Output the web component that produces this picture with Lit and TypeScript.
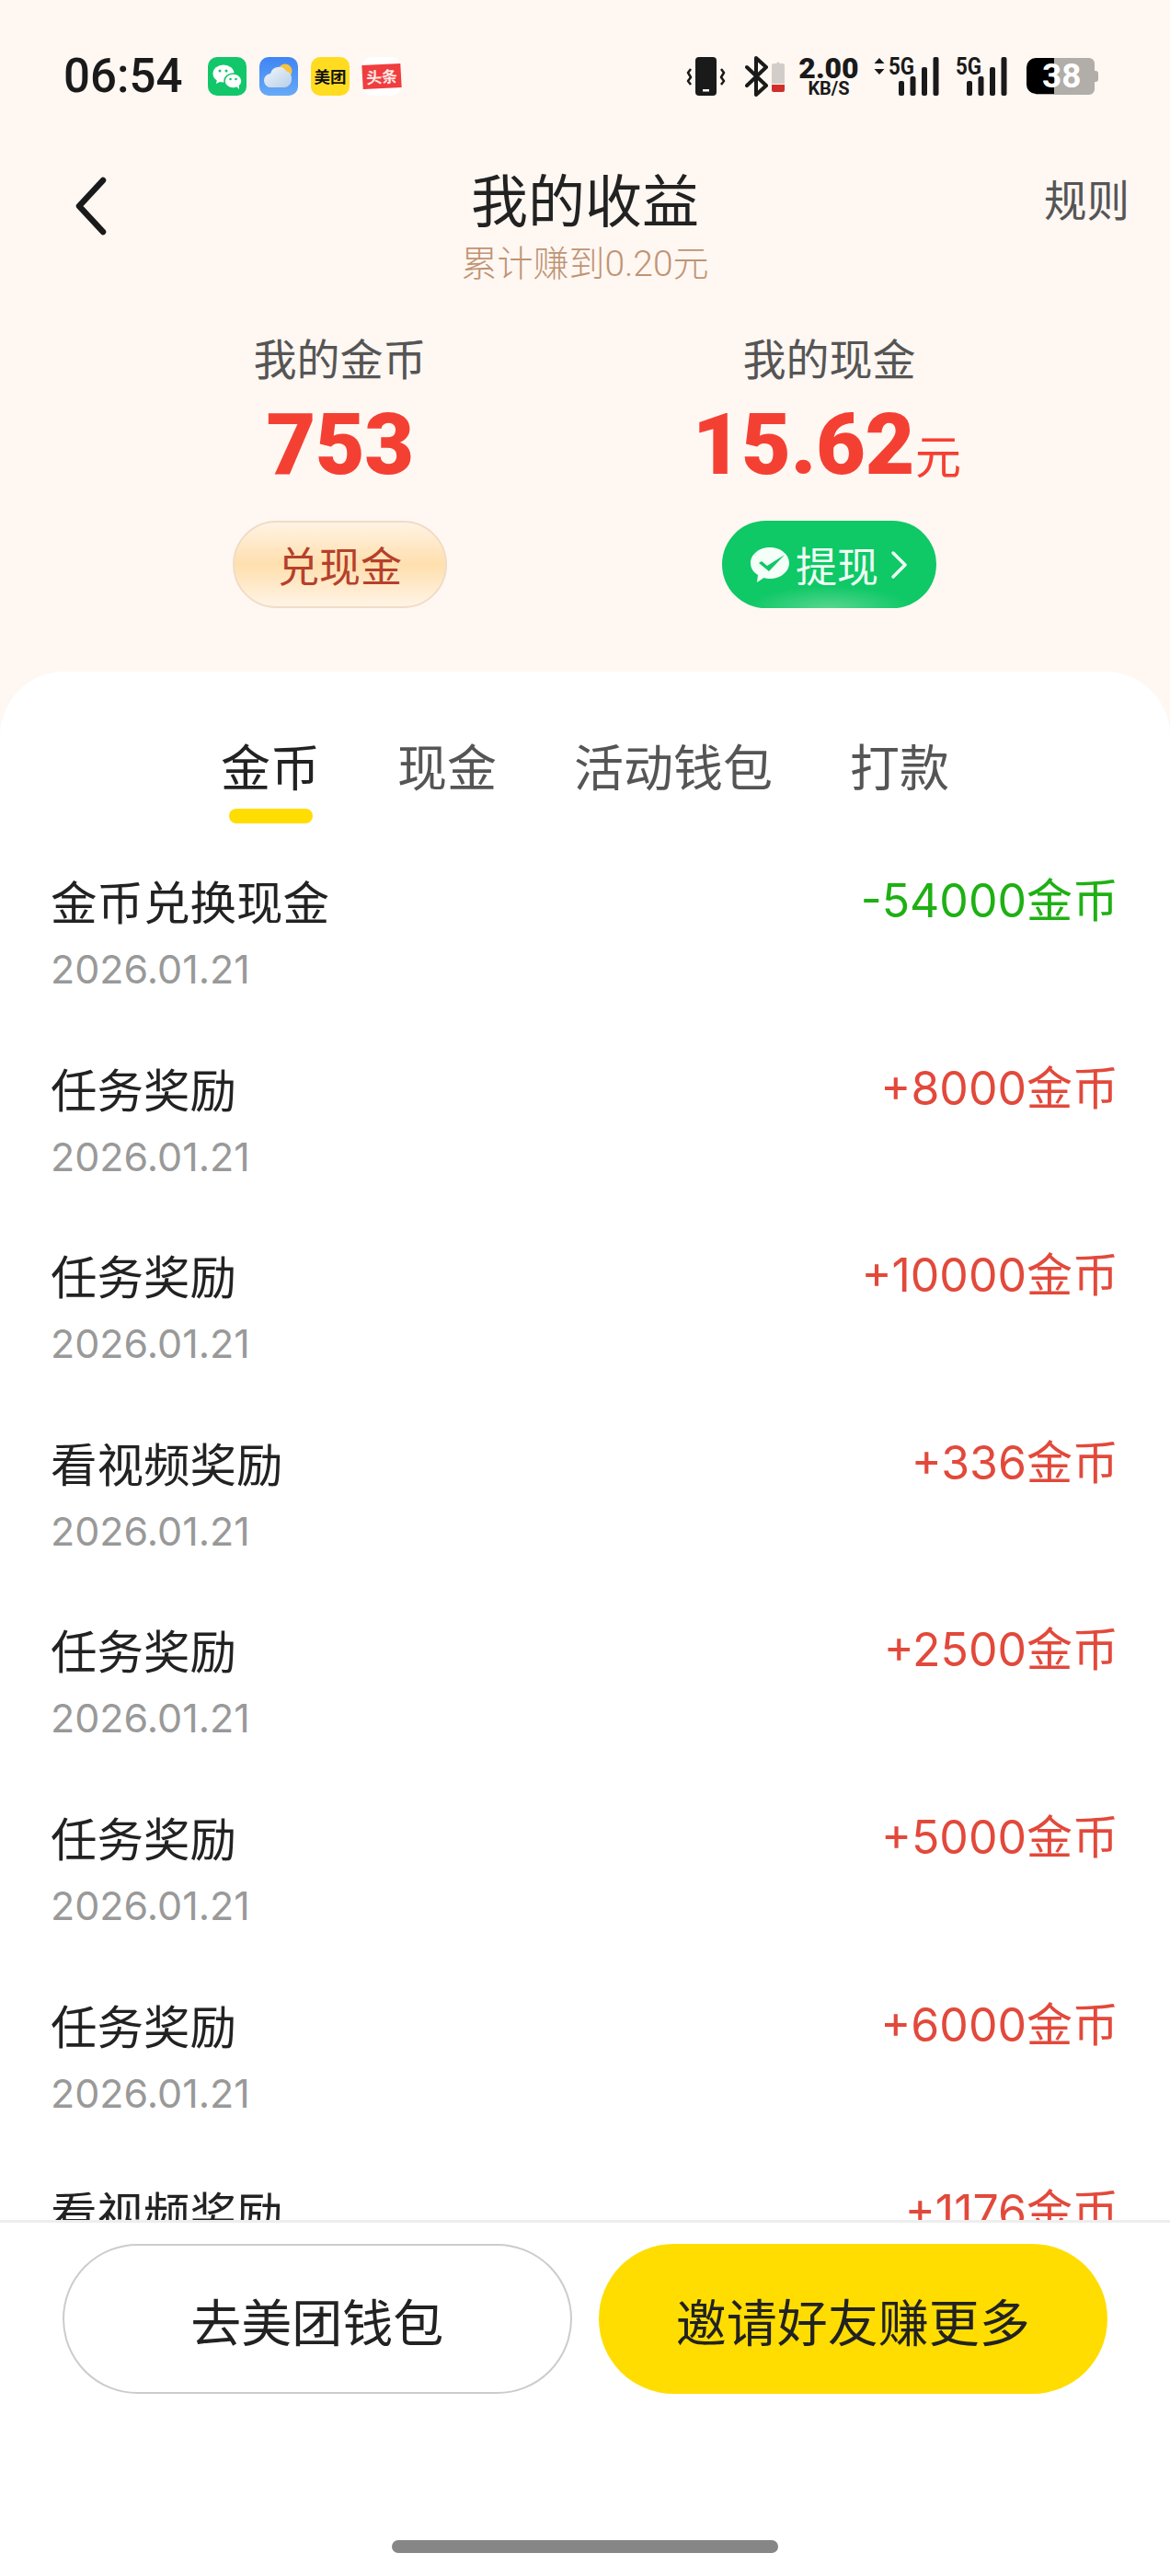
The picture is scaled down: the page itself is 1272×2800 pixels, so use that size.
import { LitElement, html, css, svg } from "lit";
import { customElement } from "lit/decorators.js";

const rows: [string, string, string][] = [
  ["金币兑换现金", "-54000金币", "neg"],
  ["任务奖励", "+8000金币", "pos"],
  ["任务奖励", "+10000金币", "pos"],
  ["看视频奖励", "+336金币", "pos"],
  ["任务奖励", "+2500金币", "pos"],
  ["任务奖励", "+5000金币", "pos"],
  ["任务奖励", "+6000金币", "pos"],
  ["看视频奖励", "+1176金币", "pos"],
];

const bars = (x0: number) => svg`
  <rect x="${x0}" y="27" width="6" height="16" rx="2"/>
  <rect x="${x0 + 12.5}" y="22" width="6" height="21" rx="2"/>
  <rect x="${x0 + 25}" y="12" width="6" height="31" rx="2"/>
  <rect x="${x0 + 37.5}" y="1" width="6" height="42" rx="2"/>`;

@customElement("app-root")
export class AppRoot extends LitElement {
  static styles = css`
    :host {
      display: block;
      width: 1272px;
      height: 2800px;
      font-family: Inter, "Noto Sans CJK SC", sans-serif;
      color: #222;
    }
    .page {
      height: 2800px;
      background: #fff7f2;
      display: flex;
      flex-direction: column;
      overflow: hidden;
    }
    .status {
      height: 42px;
      margin-top: 62px;
      padding-left: 69px;
      display: flex;
      align-items: center;
    }
    .time {
      font-family: Roboto, sans-serif;
      font-size: 51px;
      font-weight: 500;
      color: #1a1a1a;
      width: 157px;
      line-height: 42px;
    }
    .apps {
      display: flex;
      gap: 14px;
    }
    .app {
      width: 42px;
      height: 42px;
      display: block;
    }
    .tile {
      box-sizing: border-box;
      width: 42px;
      height: 42px;
      border-radius: 10px;
      display: flex;
      align-items: center;
      justify-content: center;
      font-family: "Noto Sans CJK SC", sans-serif;
      font-weight: 700;
      white-space: nowrap;
    }
    .tile.mt {
      background: #ffdc1f;
      color: #111;
      font-size: 17.5px;
      line-height: 20px;
    }
    .tile.tt {
      background: #fff;
    }
    .band {
      width: 42px;
      height: 26px;
      transform: rotate(-3deg);
      background: #ef3d40;
      color: #ffe9e6;
      font-size: 17px;
      line-height: 26px;
      text-align: center;
    }
    .sys {
      margin-left: 310px;
      display: flex;
      align-items: center;
      height: 44px;
      color: #1a1a1a;
    }
    .sys svg {
      display: block;
      flex: none;
    }
    .speed {
      width: 68px;
      margin: 0 15px 0 14px;
      text-align: center;
      font-family: Roboto, sans-serif;
      font-weight: 700;
      line-height: 1;
    }
    .speed b {
      display: block;
      font-size: 32px;
      height: 26px;
      line-height: 26px;
    }
    .speed i {
      display: block;
      font-style: normal;
      font-size: 20px;
      line-height: 18px;
    }
    .net {
      position: relative;
      height: 44px;
      flex: none;
    }
    .g {
      position: absolute;
      top: -1px;
      font-family: Roboto, sans-serif;
      font-size: 26px;
      line-height: 24px;
      font-weight: 700;
      color: #1a1a1a;
      transform: scaleX(0.86);
      transform-origin: left center;
    }
    .batt {
      position: relative;
      flex: none;
      width: 78px;
      height: 40px;
      margin-left: 21px;
    }
    .batt span {
      position: absolute;
      left: 17px;
      top: 0;
      font-family: Roboto, sans-serif;
      font-size: 37px;
      line-height: 40px;
      font-weight: 700;
      color: #fff;
    }
    .nav {
      position: relative;
      height: 120px;
      margin-top: 72px;
      text-align: center;
    }
    .back {
      position: absolute;
      left: 76px;
      top: 14px;
    }
    .title {
      font-size: 62px;
      line-height: 88px;
      color: #222;
    }
    .rule {
      position: absolute;
      right: 44px;
      top: 12px;
      font-size: 46.5px;
      line-height: 60px;
      color: #555;
    }
    .sub {
      font-family: Roboto, "Noto Sans CJK SC", sans-serif;
      font-size: 39px;
      line-height: 46px;
      color: #bf9474;
      font-weight: 300;
    }
    .stats {
      display: flex;
      margin-top: 65px;
      padding-left: 253px;
      gap: 299px;
    }
    .stat {
      width: 233px;
      display: flex;
      flex-direction: column;
      align-items: center;
    }
    .label {
      font-size: 47px;
      line-height: 60px;
      color: #555;
      white-space: nowrap;
    }
    .num {
      font-family: Roboto, "Noto Sans CJK SC", sans-serif;
      font-size: 93px;
      font-weight: 900;
      line-height: 100px;
      height: 100px;
      margin-top: 13px;
      color: #f44033;
      white-space: nowrap;
      letter-spacing: -0.5px;
    }
    .num small {
      font-size: 50px;
      font-weight: 400;
      margin-left: 1px;
      padding-right: 6px;
    }
    .btn {
      box-sizing: border-box;
      width: 233px;
      height: 95px;
      margin-top: 32px;
      border-radius: 48px;
      display: flex;
      align-items: center;
      justify-content: center;
      font-size: 45px;
    }
    .btn.gold {
      border: 2px solid #f0dcc6;
      color: #b5402b;
      background: linear-gradient(#fff3e4 0%, #ffdfae 50%, #fff4e6 100%);
    }
    .btn.green {
      color: #eefff4;
      gap: 6px;
      background: radial-gradient(ellipse 90px 24px at 50% 100%, #57d68f, transparent), #0fc866;
    }
    .sheet {
      flex: 1;
      min-height: 0;
      margin-top: 69px;
      background: #fff;
      border-radius: 70px 70px 0 0;
      display: flex;
      flex-direction: column;
    }
    .tabs {
      display: flex;
      justify-content: center;
      gap: 84px;
      padding: 0;
      margin-top: 70px;
      height: 72px;
      font-size: 54px;
      line-height: 72px;
      color: #555;
      flex: none;
    }
    .tab {
      position: relative;
      white-space: nowrap;
    }
    .tab.on {
      color: #222;
    }
    .tab.on::after {
      content: "";
      position: absolute;
      left: 9px;
      right: 8px;
      top: 79px;
      height: 16px;
      border-radius: 8px;
      background: #ffdd00;
    }
    .list {
      flex: 1;
      min-height: 0;
      overflow: hidden;
      padding: 0 56px 0 55px;
      margin-top: 75px;
    }
    .row {
      height: 203.6px;
      display: flex;
      justify-content: space-between;
    }
    .name {
      font-size: 50.5px;
      line-height: 70px;
      color: #222;
    }
    .date {
      font-size: 43px;
      line-height: 60px;
      margin-top: 6px;
      color: #999;
    }
    .val {
      font-size: 50px;
      line-height: 70px;
      margin-top: -3px;
    }
    .val.neg {
      color: #1fb014;
    }
    .val.pos {
      color: #e2493b;
    }
    .foot {
      flex: none;
      height: 387px;
      box-sizing: border-box;
      border-top: 3px solid #eee;
      background: #fff;
      position: relative;
      display: flex;
      gap: 29px;
      padding: 23px 68px 0 68px;
      align-items: flex-start;
    }
    .cta {
      box-sizing: border-box;
      height: 163px;
      flex: 1 1 553px;
      border-radius: 82px;
      display: flex;
      align-items: center;
      justify-content: center;
      font-size: 55px;
      color: #222;
    }
    .cta.line {
      border: 2px solid #ccc;
    }
    .cta.fill {
      background: #ffdd00;
      color: #222;
    }
    .home {
      position: absolute;
      left: 426px;
      top: 345px;
      width: 420px;
      height: 14px;
      border-radius: 7px;
      background: #868686;
    }
  `;

  render() {
    return html`
      <div class="page">
        <div class="status">
          <div class="time">06:54</div>
          <div class="apps">
            <svg class="app" viewBox="0 0 42 42">
              <rect width="42" height="42" rx="10" fill="#12c76a"/>
              <ellipse cx="17" cy="18" rx="11.5" ry="9.500" fill="#fff"/>
              <path d="M10 24l-1 5 6-3z" fill="#fff"/>
              <ellipse cx="27.500" cy="26" rx="9.500" ry="8" fill="#fff" stroke="#12c76a" stroke-width="1.500"/>
              <path d="M31 32l3 3 0-5z" fill="#fff"/>
              <circle cx="13" cy="15" r="1.500" fill="#12c76a"/><circle cx="20" cy="15" r="1.500" fill="#12c76a"/>
              <circle cx="24.500" cy="24" r="1.300" fill="#12c76a"/><circle cx="30.500" cy="24" r="1.300" fill="#12c76a"/>
            </svg>
            <svg class="app" viewBox="0 0 42 42">
              <defs>
                <linearGradient id="sky" x1="0" y1="0" x2="0" y2="1"><stop offset="0" stop-color="#3f84f4"/><stop offset="1" stop-color="#68a9f6"/></linearGradient>
                <linearGradient id="cl" x1="0" y1="0" x2="1" y2="1"><stop offset="0" stop-color="#f2f6fa"/><stop offset="1" stop-color="#b7cfe8"/></linearGradient>
              </defs>
              <rect width="42" height="42" rx="10" fill="url(#sky)"/>
              <circle cx="28" cy="15" r="7.500" fill="#f7c43c"/>
              <path d="M13 33a7 7 0 0 1-1-15 9.500 9.500 0 0 1 17-3 9 9 0 0 1 6 9 8.500 8.500 0 0 1-7 9z" fill="url(#cl)"/>
            </svg>
            <div class="tile mt">美团</div>
            <div class="tile tt"><div class="band">头条</div></div>
          </div>
          <div class="sys">
            <svg width="44" height="44" viewBox="0 0 44 44">
              <rect x="10" y="1" width="23" height="42" rx="4" fill="#1a1a1a"/>
              <rect x="18" y="36" width="7" height="2.500" fill="#fff"/>
              <path d="M5 14l-3 4 3 5-3 4 3 4M38 14l3 4-3 5 3 4-3 4" fill="none" stroke="#1a1a1a" stroke-width="2.500" stroke-linejoin="round"/>
            </svg>
            <svg style="margin-left:20px" width="26" height="44" viewBox="0 0 26 44">
              <path d="M2 12l21 20-11 10V2l11 10L2 32" fill="none" stroke="#1a1a1a" stroke-width="4" stroke-linejoin="round" stroke-linecap="round"/>
            </svg>
            <svg style="margin-left:3px" width="14" height="36" viewBox="0 0 14 36">
              <path d="M2 4h3l2-2 2 2h3a2 2 0 0 1 2 2v20H0V6a2 2 0 0 1 2-2z" fill="#d2cdc9"/>
              <path d="M0 27h14v6a2 2 0 0 1-2 2H2a2 2 0 0 1-2-2z" fill="#cf2f2a"/>
            </svg>
            <div class="speed"><b>2.00</b><i>KB/S</i></div>
            <div class="net" style="width:72px">
              <svg width="72" height="44" viewBox="0 0 72 44" fill="#1a1a1a">
                <path d="M6 2l5.500 6H.5zM6 20l5.500-6H.5z"/>
                ${bars(27)}
              </svg>
              <span class="g" style="left:16px">5G</span>
            </div>
            <div class="net" style="width:56px;margin-left:17px">
              <svg width="56" height="44" viewBox="0 0 56 44" fill="#1a1a1a">${bars(12)}</svg>
              <span class="g" style="left:0">5G</span>
            </div>
            <div class="batt">
              <svg width="78" height="40" viewBox="0 0 78 40">
                <path d="M10 0h58a6 6 0 0 1 6 6v8h1a3 3 0 0 1 3 3v6a3 3 0 0 1-3 3h-1v8a6 6 0 0 1-6 6H10z" fill="#b1ada9"/>
                <path d="M30 0H10A10 10 0 0 0 0 10v19a10 10 0 0 0 10 10h20z" fill="#000"/>
              </svg>
              <span>38</span>
            </div>
          </div>
        </div>

        <div class="nav">
          <svg class="back" width="46" height="68" viewBox="0 0 46 68">
            <path d="M36 6L10 34l26 28" fill="none" stroke="#1a1a1a" stroke-width="6.500" stroke-linecap="round" stroke-linejoin="round"/>
          </svg>
          <div class="title">我的收益</div>
          <div class="sub">累计赚到0.20元</div>
          <div class="rule">规则</div>
        </div>

        <div class="stats">
          <div class="stat">
            <div class="label">我的金币</div>
            <div class="num">753</div>
            <div class="btn gold">兑现金</div>
          </div>
          <div class="stat">
            <div class="label">我的现金</div>
            <div class="num">15.62<small>元</small></div>
            <div class="btn green">
              <svg width="44" height="40" viewBox="0 0 44 40">
                <path d="M22 1c11.500 0 21 7.500 21 17S33.500 35 22 35c-2.500 0-4.500-.3-6.500-1L8 39l1-8C4 28 1 23.500 1 18 1 8.500 10.500 1 22 1z" fill="#f4fff8"/>
                <path d="M10 18l3-2 6 5L38 9 21 27z" fill="#0fc866"/>
              </svg>
              <span>提现</span>
              <svg style="margin-left:7px" width="20" height="32" viewBox="0 0 20 32">
                <path d="M3 3l13 13L3 29" fill="none" stroke="#eefff4" stroke-width="3.500" stroke-linecap="round" stroke-linejoin="round"/>
              </svg>
            </div>
          </div>
        </div>

        <div class="sheet">
          <div class="tabs">
            <div class="tab on">金币</div>
            <div class="tab">现金</div>
            <div class="tab">活动钱包</div>
            <div class="tab">打款</div>
          </div>
          <div class="list">
            ${rows.map(
              ([n, v, k]) => html`
                <div class="row">
                  <div>
                    <div class="name">${n}</div>
                    <div class="date">2026.01.21</div>
                  </div>
                  <div class="val ${k}">${v}</div>
                </div>
              `
            )}
          </div>
          <div class="foot">
            <div class="cta line">去美团钱包</div>
            <div class="cta fill">邀请好友赚更多</div>
            <div class="home"></div>
          </div>
        </div>
      </div>
    `;
  }
}
